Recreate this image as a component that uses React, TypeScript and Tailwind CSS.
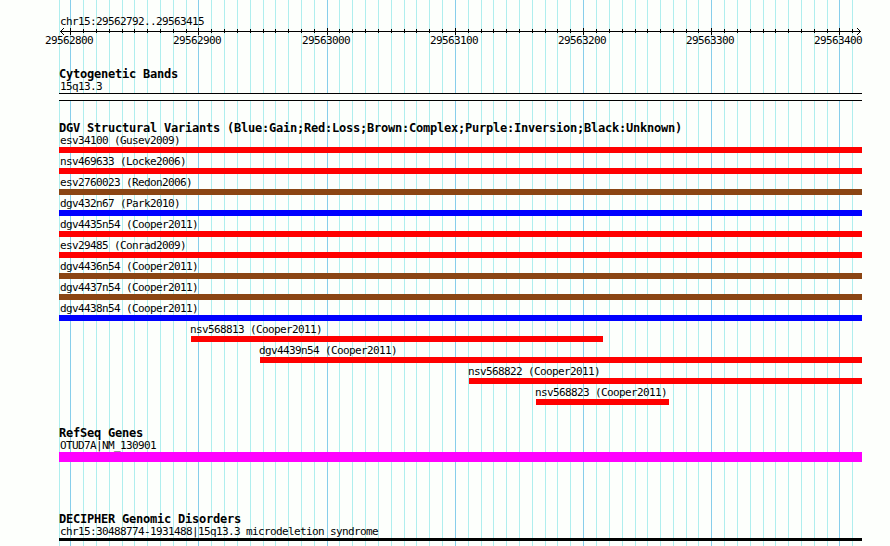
import { clsx } from 'clsx';

interface Feature {
  label: string;
  start: number;
  end: number;
  color: string;
}

const LEFT = 59;
const RIGHT = 862;

const MAJOR_TICKS = [
  { x: 70, label: '29562800' },
  { x: 198, label: '29562900' },
  { x: 327, label: '29563000' },
  { x: 455, label: '29563100' },
  { x: 583, label: '29563200' },
  { x: 711, label: '29563300' },
  { x: 839, label: '29563400' },
];

const MINOR_TICKS = [
  83, 96, 109, 122, 134, 147, 160, 173, 186,
  211, 224, 237, 250, 263, 275, 288, 301, 314,
  339, 352, 365, 378, 391, 404, 416, 429, 442,
  468, 481, 493, 506, 519, 532, 545, 557, 570,
  596, 609, 622, 635, 647, 660, 673, 686, 698,
  724, 737, 750, 763, 775, 788, 801, 814, 827,
  852,
];

const LOSS = 'bg-[#ff0000]';
const GAIN = 'bg-[#0000ff]';
const COMPLEX = 'bg-[#8b4513]';

const VARIANTS: Feature[] = [
  { label: 'esv34100 (Gusev2009)', start: LEFT, end: RIGHT, color: LOSS },
  { label: 'nsv469633 (Locke2006)', start: LEFT, end: RIGHT, color: LOSS },
  { label: 'esv2760023 (Redon2006)', start: LEFT, end: RIGHT, color: COMPLEX },
  { label: 'dgv432n67 (Park2010)', start: LEFT, end: RIGHT, color: GAIN },
  { label: 'dgv4435n54 (Cooper2011)', start: LEFT, end: RIGHT, color: LOSS },
  { label: 'esv29485 (Conrad2009)', start: LEFT, end: RIGHT, color: LOSS },
  { label: 'dgv4436n54 (Cooper2011)', start: LEFT, end: RIGHT, color: COMPLEX },
  { label: 'dgv4437n54 (Cooper2011)', start: LEFT, end: RIGHT, color: COMPLEX },
  { label: 'dgv4438n54 (Cooper2011)', start: LEFT, end: RIGHT, color: GAIN },
  { label: 'nsv568813 (Cooper2011)', start: 191, end: 603, color: LOSS },
  { label: 'dgv4439n54 (Cooper2011)', start: 260, end: RIGHT, color: LOSS },
  { label: 'nsv568822 (Cooper2011)', start: 469, end: RIGHT, color: LOSS },
  { label: 'nsv568823 (Cooper2011)', start: 536, end: 669, color: LOSS },
];

function GridLines() {
  return (
    <svg className="absolute inset-0" width="890" height="546" shapeRendering="crispEdges">
      {[LEFT, ...MINOR_TICKS].map((x) => (
        <rect key={x} x={x} y="0" width="1" height="546" fill="#afeeee" />
      ))}
      {MAJOR_TICKS.map(({ x }) => (
        <rect key={x} x={x} y="0" width="1" height="546" fill="#87ceeb" />
      ))}
    </svg>
  );
}

function Ruler() {
  return (
    <svg className="block" width="890" height="9" shapeRendering="crispEdges">
      <rect x="60" y="4" width="801" height="1" />
      {MINOR_TICKS.map((x) => (
        <rect key={x} x={x} y="2" width="1" height="4" />
      ))}
      {MAJOR_TICKS.map(({ x }) => (
        <rect key={x} x={x} y="1" width="1" height="7" />
      ))}
      {[1, 2, 3].map((d) => (
        <g key={d}>
          <rect x={60 + d} y={4 - d} width="1" height="1" />
          <rect x={60 + d} y={4 + d} width="1" height="1" />
          <rect x={860 - d} y={4 - d} width="1" height="1" />
          <rect x={860 - d} y={4 + d} width="1" height="1" />
        </g>
      ))}
    </svg>
  );
}

function Label({ children, className }: { children: string; className?: string }) {
  return (
    <p className={clsx('text-[11px] leading-[13px] tracking-[-0.622px] whitespace-pre', className)}>
      {children}
    </p>
  );
}

function Title({ children }: { children: string }) {
  return (
    <h2 className="h-3 pl-[59px] text-[12px] leading-3 font-bold tracking-[-0.224px] whitespace-pre">
      {children}
    </h2>
  );
}

function VariantRow({ label, start, end, color }: Feature) {
  const labelX = start === LEFT ? start + 1 : start - 1;
  return (
    <div className="h-[21px]">
      <div className="h-[15px] pt-0.5" style={{ paddingLeft: labelX }}>
        <Label>{label}</Label>
      </div>
      <div className={clsx('h-1.5', color)} style={{ marginLeft: start, width: end - start }} />
    </div>
  );
}

export default function App() {
  return (
    <div className="relative w-[890px] h-[546px] overflow-hidden bg-[#fdfffc] text-black font-['DejaVu_Sans_Mono',monospace]">
      <GridLines />
      <main className="relative flex flex-col">
        <header className="h-[68px] pt-[15px]">
          <Label className="pl-[60px] h-3">chr15:29562792..29563415</Label>
          <Ruler />
          <div className="flex pl-[45px] -mt-0.5">
            {MAJOR_TICKS.map(({ x, label }, i) => (
              <div key={x} style={{ width: (MAJOR_TICKS[i + 1]?.x ?? x + 48) - x }}>
                <Label>{label}</Label>
              </div>
            ))}
          </div>
        </header>

        {/* Cytogenetic bands */}
        <section className="h-[54px]">
          <Title>Cytogenetic Bands</Title>
          <Label className="pl-[60px]">15q13.3</Label>
          <div className="ml-[59px] w-[803px] h-2 border-y border-black bg-[#fdfffc]" />
        </section>

        {/* Structural variants */}
        <section className="h-[305px]">
          <Title>DGV Structural Variants (Blue:Gain;Red:Loss;Brown:Complex;Purple:Inversion;Black:Unknown)</Title>
          <div className="-mt-0.5">
            {VARIANTS.map((variant) => (
              <VariantRow key={variant.label} {...variant} />
            ))}
          </div>
        </section>

        {/* Genes */}
        <section className="h-[86px]">
          <Title>RefSeq Genes</Title>
          <Label className="pl-[60px]">OTUD7A|NM_130901</Label>
          <div className="ml-[59px] w-[803px] h-2.5 bg-[#ff00ff]" />
        </section>

        {/* Genomic disorders */}
        <section>
          <Title>DECIPHER Genomic Disorders</Title>
          <Label className="pl-[60px]">chr15:30488774-1931488|15q13.3 microdeletion syndrome</Label>
          <div className="ml-[59px] w-[803px] h-[3px] bg-black" />
        </section>
      </main>
    </div>
  );
}
